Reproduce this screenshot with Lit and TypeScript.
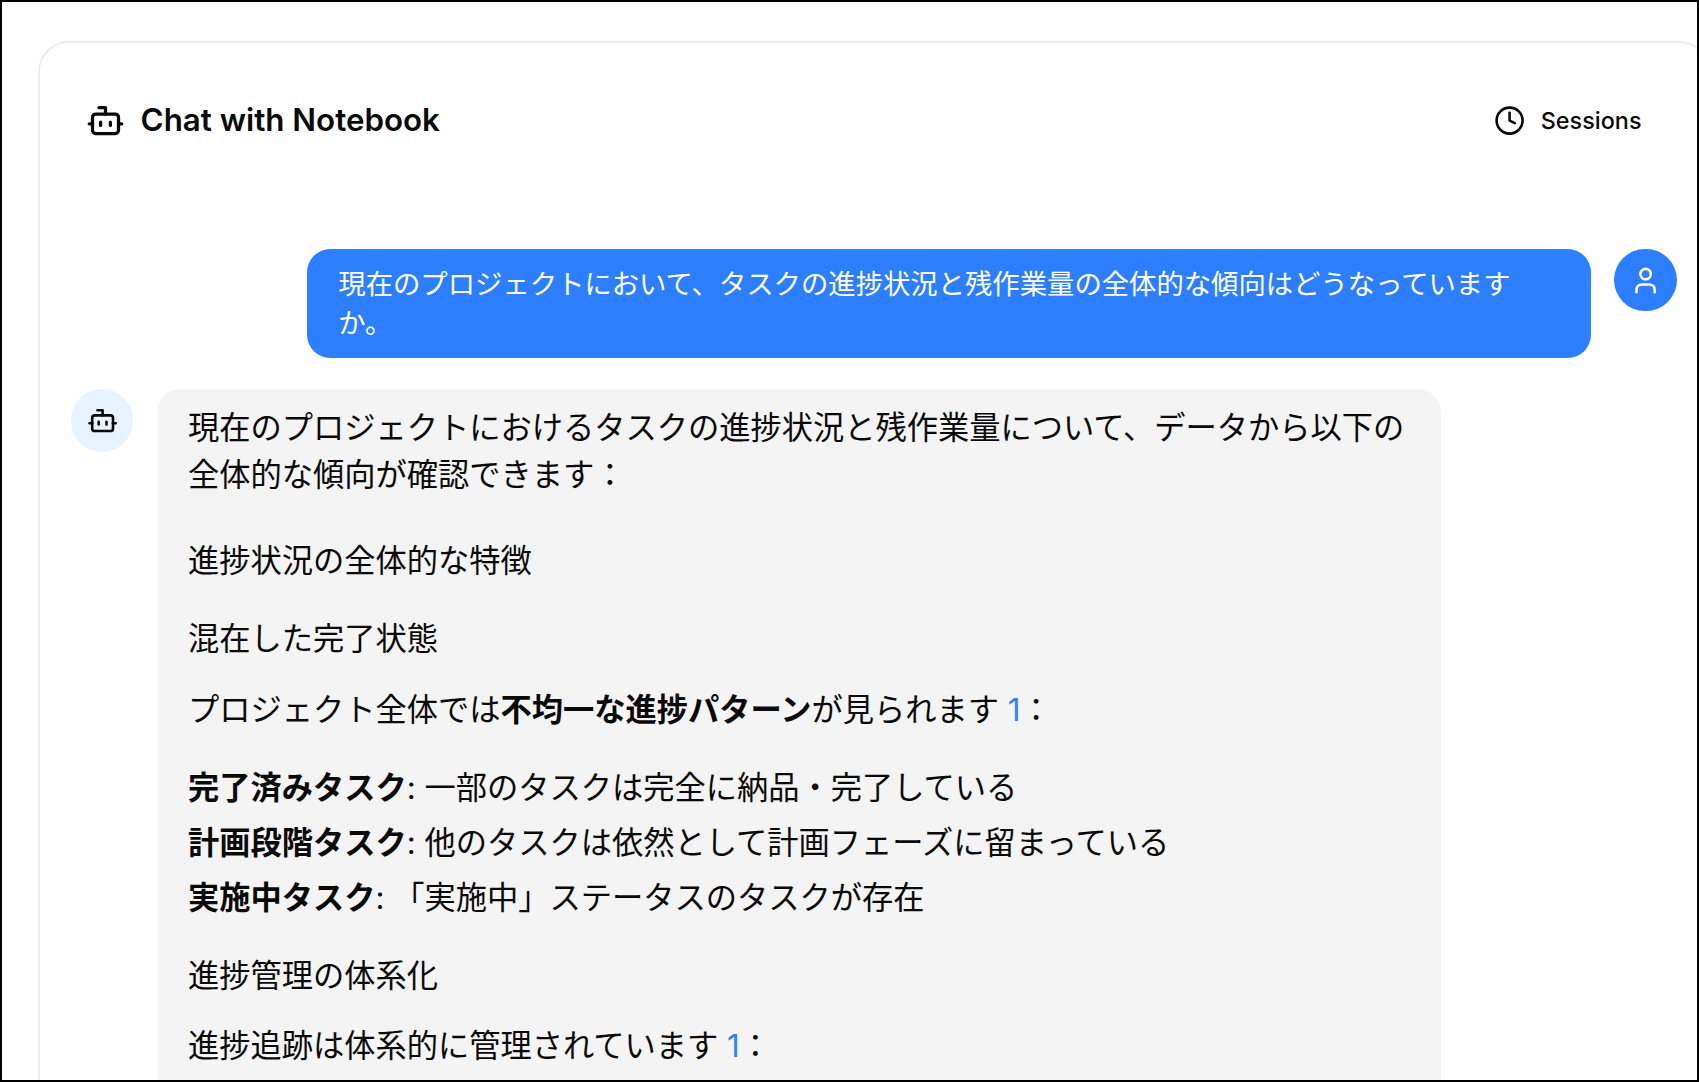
import { LitElement, html, css, svg } from "lit";
import { customElement } from "lit/decorators.js";

const botIcon = svg`<path d="M12 8V4H8"/><rect x="4" y="8" width="16" height="12" rx="2"/><path d="M2 14h2"/><path d="M20 14h2"/><path d="M15 13v2"/><path d="M9 13v2"/>`;
const clockIcon = svg`<circle cx="12" cy="12" r="10"/><path d="M12 6v6l4 2"/>`;
const userIcon = svg`<circle cx="12" cy="7" r="4"/><path d="M5 21v-2a4 4 0 0 1 4-4h6a4 4 0 0 1 4 4v2"/>`;

@customElement("app-root")
export class AppRoot extends LitElement {
  static styles = css`
    :host {
      display: block;
      box-sizing: border-box;
      width: 1699px;
      height: 1082px;
      border: 2px solid #000;
      overflow: hidden;
      background: #fff;
      padding: 39px 0 0 36px;
      font-family: Inter, "Noto Sans CJK JP", sans-serif;
      color: #0a0a0a;
    }
    .card {
      box-sizing: border-box;
      width: 1672px;
      border: 2.5px solid #ececec;
      border-radius: 31px;
      padding: 0 31.5px 0 31px;
      background: #fff;
    }
    header {
      display: flex;
      align-items: center;
      justify-content: space-between;
      height: 155.5px;
      padding: 0 0 0 15px;
      margin-bottom: 50.5px;
    }
    .title {
      display: flex;
      align-items: center;
      gap: 15.6px;
      font-size: 31.3px;
      font-weight: 600;
      line-height: 39px;
    }
    .sessions {
      display: flex;
      align-items: center;
      gap: 15.6px;
      font-size: 23.4px;
      font-weight: 500;
      padding-right: 35px;
    }
    svg {
      fill: none;
      stroke: currentColor;
      stroke-width: 2;
      stroke-linecap: round;
      stroke-linejoin: round;
      flex: none;
      display: block;
    }
    .i39 { width: 39px; height: 39px; }
    .i31 { width: 31.2px; height: 31.2px; }
    .msg {
      display: flex;
      gap: 23.4px;
      margin-bottom: 31.2px;
      align-items: flex-start;
    }
    .msg.user { justify-content: flex-end; }
    .avatar {
      width: 62.4px;
      height: 62.4px;
      border-radius: 50%;
      display: flex;
      align-items: center;
      justify-content: center;
      flex: none;
    }
    .avatar.u { background: #2e7fff; color: #fff; }
    .avatar.b { background: #e9f2ff; color: #0a0a0a; }
    .bubble {
      box-sizing: border-box;
      border-radius: 23.4px;
      padding: 15.6px 31.2px;
    }
    .user .bubble {
      background: #2e7fff;
      color: #fff;
      font-size: 27.35px;
      line-height: 39px;
      width: 79.95%;
    }
    .bot .bubble {
      background: #f4f4f4;
      font-size: 31.25px;
      line-height: 46.8px;
      width: 80%;
    }
    p, ul { margin: 0; padding: 0; list-style: none; }
    .lead { margin-bottom: 39px; }
    .h1 { margin-bottom: 32px; }
    .h2 { margin-bottom: 23.4px; }
    .body { margin-bottom: 32px; }
    ul { margin-bottom: 31.2px; display: flex; flex-direction: column; gap: 7.8px; }
    b { font-weight: 700; }
    .cite { color: #2e7fff; }
  `;

  render() {
    return html`
      <div class="card">
        <header>
          <div class="title"><svg class="i39" viewBox="0 0 24 24">${botIcon}</svg>Chat with Notebook</div>
          <div class="sessions"><svg class="i31" viewBox="0 0 24 24">${clockIcon}</svg>Sessions</div>
        </header>
        <div class="msg user">
          <div class="bubble">現在のプロジェクトにおいて、タスクの進捗状況と残作業量の全体的な傾向はどうなっていますか。</div>
          <div class="avatar u"><svg class="i31" viewBox="0 0 24 24">${userIcon}</svg></div>
        </div>
        <div class="msg bot">
          <div class="avatar b"><svg class="i31" viewBox="0 0 24 24">${botIcon}</svg></div>
          <div class="bubble">
            <p class="lead">現在のプロジェクトにおけるタスクの進捗状況と残作業量について、データから以下の全体的な傾向が確認できます：</p>
            <p class="h1">進捗状況の全体的な特徴</p>
            <p class="h2">混在した完了状態</p>
            <p class="body">プロジェクト全体では<b>不均一な進捗パターン</b>が見られます <span class="cite">1</span>：</p>
            <ul>
              <li><b>完了済みタスク</b>: 一部のタスクは完全に納品・完了している</li>
              <li><b>計画段階タスク</b>: 他のタスクは依然として計画フェーズに留まっている</li>
              <li><b>実施中タスク</b>: 「実施中」ステータスのタスクが存在</li>
            </ul>
            <p class="h2">進捗管理の体系化</p>
            <p class="body">進捗追跡は体系的に管理されています <span class="cite">1</span>：</p>
          </div>
        </div>
      </div>
    `;
  }
}
